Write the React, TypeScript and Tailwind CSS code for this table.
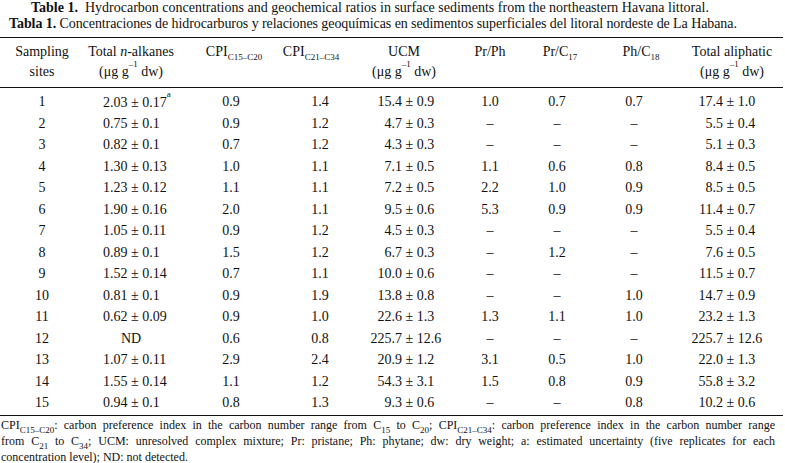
import React from "react";

type Pm = [string, string] | string;

type Row = {
  site: string;
  alk: Pm;
  note?: boolean;
  cpi1: string;
  cpi2: string;
  ucm: Pm;
  prph: string;
  prc17: string;
  phc18: string;
  total: Pm;
};

const D = "–";

const ROWS: Row[] = [
  { site: "1", alk: ["2.03", "0.17"], note: true, cpi1: "0.9", cpi2: "1.4", ucm: ["15.4", "0.9"], prph: "1.0", prc17: "0.7", phc18: "0.7", total: ["17.4", "1.0"] },
  { site: "2", alk: ["0.75", "0.1"], cpi1: "0.9", cpi2: "1.2", ucm: ["4.7", "0.3"], prph: D, prc17: D, phc18: D, total: ["5.5", "0.4"] },
  { site: "3", alk: ["0.82", "0.1"], cpi1: "0.7", cpi2: "1.2", ucm: ["4.3", "0.3"], prph: D, prc17: D, phc18: D, total: ["5.1", "0.3"] },
  { site: "4", alk: ["1.30", "0.13"], cpi1: "1.0", cpi2: "1.1", ucm: ["7.1", "0.5"], prph: "1.1", prc17: "0.6", phc18: "0.8", total: ["8.4", "0.5"] },
  { site: "5", alk: ["1.23", "0.12"], cpi1: "1.1", cpi2: "1.1", ucm: ["7.2", "0.5"], prph: "2.2", prc17: "1.0", phc18: "0.9", total: ["8.5", "0.5"] },
  { site: "6", alk: ["1.90", "0.16"], cpi1: "2.0", cpi2: "1.1", ucm: ["9.5", "0.6"], prph: "5.3", prc17: "0.9", phc18: "0.9", total: ["11.4", "0.7"] },
  { site: "7", alk: ["1.05", "0.11"], cpi1: "0.9", cpi2: "1.2", ucm: ["4.5", "0.3"], prph: D, prc17: D, phc18: D, total: ["5.5", "0.4"] },
  { site: "8", alk: ["0.89", "0.1"], cpi1: "1.5", cpi2: "1.2", ucm: ["6.7", "0.3"], prph: D, prc17: "1.2", phc18: D, total: ["7.6", "0.5"] },
  { site: "9", alk: ["1.52", "0.14"], cpi1: "0.7", cpi2: "1.1", ucm: ["10.0", "0.6"], prph: D, prc17: D, phc18: D, total: ["11.5", "0.7"] },
  { site: "10", alk: ["0.81", "0.1"], cpi1: "0.9", cpi2: "1.9", ucm: ["13.8", "0.8"], prph: D, prc17: D, phc18: "1.0", total: ["14.7", "0.9"] },
  { site: "11", alk: ["0.62", "0.09"], cpi1: "0.9", cpi2: "1.0", ucm: ["22.6", "1.3"], prph: "1.3", prc17: "1.1", phc18: "1.0", total: ["23.2", "1.3"] },
  { site: "12", alk: "ND", cpi1: "0.6", cpi2: "0.8", ucm: ["225.7", "12.6"], prph: D, prc17: D, phc18: D, total: ["225.7", "12.6"] },
  { site: "13", alk: ["1.07", "0.11"], cpi1: "2.9", cpi2: "2.4", ucm: ["20.9", "1.2"], prph: "3.1", prc17: "0.5", phc18: "1.0", total: ["22.0", "1.3"] },
  { site: "14", alk: ["1.55", "0.14"], cpi1: "1.1", cpi2: "1.2", ucm: ["54.3", "3.1"], prph: "1.5", prc17: "0.8", phc18: "0.9", total: ["55.8", "3.2"] },
  { site: "15", alk: ["0.94", "0.1"], cpi1: "0.8", cpi2: "1.3", ucm: ["9.3", "0.6"], prph: D, prc17: D, phc18: "0.8", total: ["10.2", "0.6"] },
];

const GRID =
  "grid grid-cols-[84px_94px_112px_42px_144px_28px_112px_50px_132px]";

function Sub({ children }: { children: React.ReactNode }) {
  return <sub className="text-[9px] align-[-2px] leading-none">{children}</sub>;
}

function Mu() {
  return (
    <span>
      (μg g<sup className="text-[9px] align-[5px] leading-none">–1</sup> dw)
    </span>
  );
}

function Head({ children }: { children: React.ReactNode }) {
  return (
    <div className="flex flex-col items-center whitespace-nowrap">
      {children}
    </div>
  );
}

// number ± error, with the ± kept on a fixed line
function PlusMinus({ v, w }: { v: [string, string]; w: string }) {
  return (
    <div className="whitespace-nowrap">
      <span className={`inline-block text-right ${w}`}>{v[0]}</span> ±{" "}
      {v[1]}
    </div>
  );
}

export default function App() {
  return (
    <div className="w-[785px] h-[463px] overflow-hidden bg-white text-[#111] font-['Liberation_Serif',serif]">
      <div className="text-[14px] leading-[16px] whitespace-nowrap">
        <div className="pl-[31px]">
          <b>Table 1.</b>&nbsp; Hydrocarbon concentrations and geochemical
          ratios in surface sediments from the northeastern Havana littoral.
        </div>
        <div className="pl-[9px] tracking-[-0.08px]">
          <b>Tabla 1.</b> Concentraciones de hidrocarburos y relaciones
          geoquímicas en sedimentos superficiales del litoral nordeste de La
          Habana.
        </div>
      </div>

      <div className="mt-[5px] w-[783px] border-t-[1.5px] border-b-[1.5px] border-[#111] text-[14px]">
        <div className={`${GRID} pt-[4px] pb-[5px] leading-[20px]`}>
          <Head>
            <span>Sampling</span>
            <span>sites</span>
          </Head>
          <Head>
            <span>
              Total <i>n</i>-alkanes
            </span>
            <Mu />
          </Head>
          <Head>
            <span>
              CPI<Sub>C15–C20</Sub>
            </span>
          </Head>
          <Head>
            <span>
              CPI<Sub>C21–C34</Sub>
            </span>
          </Head>
          <Head>
            <span>UCM</span>
            <Mu />
          </Head>
          <Head>
            <span>Pr/Ph</span>
          </Head>
          <Head>
            <span>
              Pr/C<Sub>17</Sub>
            </span>
          </Head>
          <Head>
            <span>
              Ph/C<Sub>18</Sub>
            </span>
          </Head>
          <Head>
            <span>Total aliphatic</span>
            <Mu />
          </Head>
        </div>
      </div>

      <div className="w-[783px] border-b-[1.5px] border-[#111] text-[14px] pt-[4px] pb-[1px] -mt-[1.5px] border-t-[1.5px]">
        {ROWS.map((r) => (
          <div key={r.site} className={`${GRID} h-[21.5px] items-center leading-none`}>
            <div className="flex justify-center">{r.site}</div>
            {typeof r.alk === "string" ? (
              <div className="flex justify-center">{r.alk}</div>
            ) : (
              <div className="pl-[19px] whitespace-nowrap">
                {r.alk[0]} ± {r.alk[1]}
                {r.note && (
                  <sup className="text-[9px] align-[5px] leading-none">a</sup>
                )}
              </div>
            )}
            <div className="flex justify-center pr-[6px]">{r.cpi1}</div>
            <div className="flex justify-center pl-[18px]">{r.cpi2}</div>
            <div>
              <PlusMinus v={r.ucm as [string, string]} w="w-[70px]" />
            </div>
            <div className="flex justify-center">{r.prph}</div>
            <div className="flex justify-center pr-[6px]">{r.prc17}</div>
            <div className="flex justify-center pr-[14px]">{r.phc18}</div>
            <div>
              <PlusMinus v={r.total as [string, string]} w="w-[57px]" />
            </div>
          </div>
        ))}
      </div>

      <div className="w-[775px] pl-[1px] pt-[1px] text-[12px] leading-[16px] whitespace-nowrap">
        <div className="text-justify [text-align-last:justify]">
          CPI<Sub>C15–C20</Sub>: carbon preference index in the carbon number
          range from C<Sub>15</Sub> to C<Sub>20</Sub>; CPI<Sub>C21–C34</Sub>:
          carbon preference index in the carbon number range
        </div>
        <div className="text-justify [text-align-last:justify]">
          from C<Sub>21</Sub> to C<Sub>34</Sub>; UCM: unresolved complex
          mixture; Pr: pristane; Ph: phytane; dw: dry weight; a: estimated
          uncertainty (five replicates for each
        </div>
        <div>concentration level); ND: not detected.</div>
      </div>
    </div>
  );
}
